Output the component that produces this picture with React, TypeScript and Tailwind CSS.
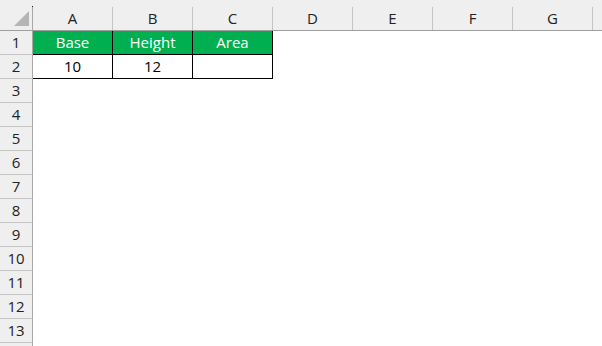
import React from "react";

const cols = ["A", "B", "C", "D", "E", "F", "G", "H"];
const rows = Array.from({ length: 14 }, (_, i) => i + 1);

export default function App() {
  return (
    <div
      className="w-[602px] h-[346px] overflow-hidden bg-white text-[15px] leading-none"
      style={{ fontFamily: '"Open Sans", "Noto Sans", sans-serif' }}
    >
      {/* top strip */}
      <div className="flex h-[7px] bg-[#efefef]">
        <div className="w-[32px] shrink-0" />
        <div className="w-px h-px self-end bg-[#222]" />
      </div>
      {/* column headers */}
      <div className="flex h-6 bg-[#efefef] border-b border-[#9e9e9e]">
        <div className="relative w-[33px] shrink-0 border-r border-[#a8a8a8]">
          <svg className="absolute left-[13px] top-[4px]" width="16" height="16" viewBox="0 0 16 16">
            <polygon points="16,0 16,15 1,15" fill="#b5b5b5" />
          </svg>
        </div>
        {cols.map((c) => (
          <div
            key={c}
            className="w-[80px] shrink-0 flex items-center justify-center border-r border-[#c4c4c4] text-[#222] pb-px"
          >
            {c === "H" ? "" : c}
          </div>
        ))}
      </div>
      {rows.map((r) => (
        <div key={r} className="flex h-6">
          <div className="w-[33px] shrink-0 flex items-center justify-center bg-[#efefef] border-r border-b border-r-[#a8a8a8] border-b-[#c4c4c4] text-[#222] pb-px">
            {r <= 13 ? r : ""}
          </div>
          {cols.map((c, ci) => {
            const inTable = ci < 3 && r <= 2;
            const header = inTable && r === 1;
            const labels = ["Base", "Height", "Area"];
            const vals = ["10", "12", ""];
            return (
              <div
                key={c}
                className={
                  "w-[80px] shrink-0 flex items-center justify-center border-r border-b pb-px " +
                  (inTable
                    ? header
                      ? "bg-[#00b050] border-black text-white"
                      : "bg-white border-black text-black"
                    : "bg-white border-transparent")
                }
              >
                {inTable ? (header ? labels[ci] : vals[ci]) : ""}
              </div>
            );
          })}
        </div>
      ))}
    </div>
  );
}
